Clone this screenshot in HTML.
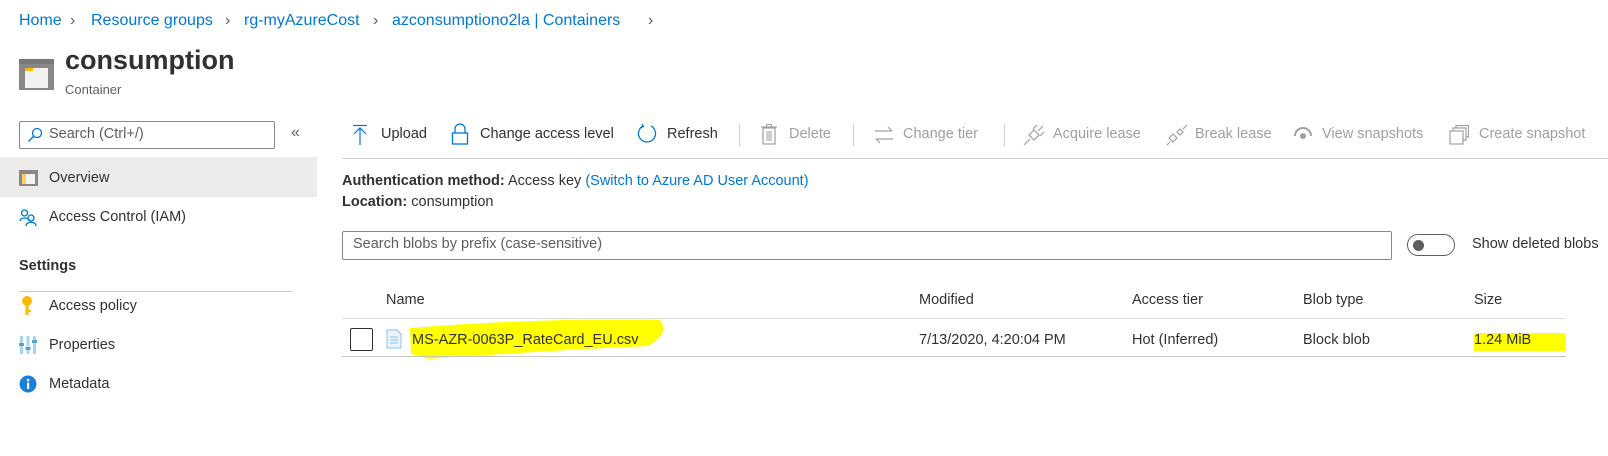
<!DOCTYPE html>
<html><head><meta charset="utf-8"><style>
*{margin:0;padding:0;box-sizing:border-box}
body{width:1608px;height:456px;background:#fff;position:relative;overflow:hidden;font-family:"Liberation Sans",sans-serif;color:#323130;font-size:14.5px}
.a{position:absolute;white-space:nowrap;line-height:1}
.b{color:#0078d4}
.g{color:#a19f9d}
.bc{font-size:16px;color:#0078d4;top:13px}
.sep{color:#605e5c}
.nm{transform-origin:left center}
</style></head><body>
<div class="a bc" style="left:19px">Home</div>
<div class="a bc sep" style="left:70px;color:#605e5c">&#x203A;</div>
<div class="a bc" style="left:91px">Resource groups</div>
<div class="a bc" style="left:225px;color:#605e5c">&#x203A;</div>
<div class="a bc" style="left:244px">rg-myAzureCost</div>
<div class="a bc" style="left:373px;color:#605e5c">&#x203A;</div>
<div class="a bc" style="left:392px">azconsumptiono2la | Containers</div>
<div class="a bc" style="left:648px;color:#605e5c">&#x203A;</div>

<svg class="a" style="left:19px;top:59px" width="35" height="31"><rect width="35" height="31" fill="#8a8886"/><rect x="0" y="0" width="35" height="5" fill="#7a7876"/><rect x="6" y="9" width="23" height="20" fill="#f2f2f2"/><rect x="6" y="9" width="8" height="3" fill="#ffb900"/></svg>
<div class="a" style="left:65px;top:47px;font-size:27px;font-weight:bold;color:#323130">consumption</div>
<div class="a" style="left:65px;top:83px;font-size:13px;color:#605e5c">Container</div>

<div class="a" style="left:19px;top:121px;width:256px;height:28px;border:1px solid #8a8886;border-radius:2px"></div>
<svg class="a" style="left:27px;top:127px" width="16" height="16"><circle cx="10" cy="6" r="4.5" fill="none" stroke="#0078d4" stroke-width="1.3"/><line x1="6.7" y1="9.3" x2="1.5" y2="14.5" stroke="#0078d4" stroke-width="1.4"/></svg>
<div class="a" style="left:49px;top:127px;color:#605e5c">Search (Ctrl+/)</div>
<div class="a" style="left:291px;top:125px;font-size:16px;color:#605e5c">«</div>

<div class="a" style="left:0;top:157px;width:317px;height:40px;background:#edebe9"></div>
<svg class="a" style="left:19px;top:170px" width="19" height="16"><rect width="19" height="16" fill="#8a8886"/><rect x="3" y="4" width="13" height="10" fill="#f2f2f2"/><rect x="3" y="4" width="4" height="10" fill="#ffb900" opacity=".6"/></svg>
<div class="a" style="left:49px;top:171px">Overview</div>
<svg class="a" style="left:19px;top:208px" width="20" height="20"><circle cx="5.5" cy="5" r="3" fill="none" stroke="#0078d4" stroke-width="1.3"/><path d="M1 13 C1 9 10 9 10 13" fill="none" stroke="#0078d4" stroke-width="1.3"/><circle cx="12" cy="10" r="3" fill="none" stroke="#0078d4" stroke-width="1.3"/><path d="M7 18 C7 13 17 13 17 18" fill="none" stroke="#0078d4" stroke-width="1.3"/></svg>
<div class="a" style="left:49px;top:210px">Access Control (IAM)</div>
<div class="a" style="left:19px;top:259px;font-weight:bold;color:#323130">Settings</div>
<div class="a" style="left:19px;top:291px;width:273px;height:1px;background:#c8c6c4"></div>
<svg class="a" style="left:21px;top:296px" width="12" height="20"><circle cx="6" cy="5" r="5" fill="#ffb900"/><rect x="4.5" y="8" width="3" height="11" fill="#ffb900"/><rect x="7" y="14" width="3" height="2" fill="#ffb900"/></svg>
<div class="a" style="left:49px;top:299px">Access policy</div>
<svg class="a" style="left:19px;top:336px" width="18" height="18"><g fill="#a8d4ef"><rect x="1" y="0" width="3" height="18"/><rect x="7.5" y="0" width="3" height="18"/><rect x="14" y="0" width="3" height="18"/></g><g fill="#5e9ec9"><rect x="0" y="7" width="5" height="3"/><rect x="6.5" y="11" width="5" height="3"/><rect x="13" y="4" width="5" height="3"/></g></svg>
<div class="a" style="left:49px;top:338px">Properties</div>
<svg class="a" style="left:19px;top:375px" width="18" height="18"><circle cx="9" cy="9" r="8.5" fill="#1a7fd8"/><rect x="8" y="7.5" width="2.2" height="6.5" fill="#fff"/><circle cx="9.1" cy="5" r="1.3" fill="#fff"/></svg>
<div class="a" style="left:49px;top:377px">Metadata</div>

<!-- toolbar -->
<svg class="a" style="left:352px;top:124px" width="16" height="22"><line x1="1" y1="1.5" x2="15" y2="1.5" stroke="#0078d4" stroke-width="1.2"/><line x1="8" y1="4" x2="8" y2="21" stroke="#0078d4" stroke-width="1.2"/><path d="M2 10 L8 4 L14 10" fill="none" stroke="#0078d4" stroke-width="1.2"/></svg>
<div class="a" style="left:381px;top:127px">Upload</div>
<svg class="a" style="left:451px;top:123px" width="18" height="22"><path d="M4 10 V6 A5 5 0 0 1 14 6 V10" fill="none" stroke="#0078d4" stroke-width="1.3"/><rect x="1.5" y="10" width="15" height="11" fill="none" stroke="#0078d4" stroke-width="1.3"/></svg>
<div class="a" style="left:480px;top:127px">Change access level</div>
<svg class="a" style="left:636px;top:123px" width="22" height="22"><path d="M7 3 A8.5 8.5 0 1 0 15 3" fill="none" stroke="#0078d4" stroke-width="1.3"/><path d="M6 1 L7.5 3.5 L4 5" fill="none" stroke="#0078d4" stroke-width="1.2"/></svg>
<div class="a" style="left:667px;top:127px">Refresh</div>
<div class="a" style="left:739px;top:124px;width:1px;height:22px;background:#d2d0ce"></div>
<svg class="a" style="left:761px;top:124px" width="16" height="21"><rect x="2" y="4" width="12" height="16" fill="none" stroke="#a19f9d" stroke-width="1.2"/><line x1="0" y1="3" x2="16" y2="3" stroke="#a19f9d" stroke-width="1.2"/><rect x="5.5" y="0.5" width="5" height="2.5" fill="none" stroke="#a19f9d"/><g stroke="#a19f9d"><line x1="6" y1="7" x2="6" y2="17"/><line x1="8" y1="7" x2="8" y2="17"/><line x1="10" y1="7" x2="10" y2="17"/></g></svg>
<div class="a g" style="left:789px;top:127px">Delete</div>
<div class="a" style="left:853px;top:124px;width:1px;height:22px;background:#d2d0ce"></div>
<svg class="a" style="left:874px;top:125px" width="20" height="20"><g fill="none" stroke="#a19f9d" stroke-width="1.2"><path d="M1 6 H18 M14 2 L18 6"/><path d="M19 14 H2 M6 18 L2 14"/></g></svg>
<div class="a g" style="left:903px;top:127px">Change tier</div>
<div class="a" style="left:1004px;top:124px;width:1px;height:22px;background:#d2d0ce"></div>
<svg class="a" style="left:1023px;top:124px" width="22" height="22"><g fill="none" stroke="#a19f9d" stroke-width="1.2"><path d="M6 11 L11 6 L16 11 L11 16 Z"/><path d="M1 21 L7 15 M15 7 L20 2 M10 5 L14 1 M17 12 L21 8"/></g></svg>
<div class="a g" style="left:1053px;top:127px">Acquire lease</div>
<svg class="a" style="left:1166px;top:124px" width="22" height="22"><g fill="none" stroke="#a19f9d" stroke-width="1.2"><path d="M3 14 L7 10 L11 14 L7 18 Z"/><path d="M11 8 L14 5 L17 8 L14 11 Z"/><path d="M1 21 L4 18 M17 5 L21 1"/></g></svg>
<div class="a g" style="left:1195px;top:127px">Break lease</div>
<svg class="a" style="left:1294px;top:127px" width="18" height="14"><path d="M1 9 A8 8 0 0 1 17 9" fill="none" stroke="#a19f9d" stroke-width="2"/><circle cx="9" cy="9" r="3" fill="#a19f9d"/></svg>
<div class="a g" style="left:1322px;top:127px">View snapshots</div>
<svg class="a" style="left:1449px;top:125px" width="20" height="20"><g fill="none" stroke="#a19f9d" stroke-width="1.2"><rect x="1" y="6" width="13" height="13"/><path d="M4 6 V3 H17 V15 H14 M7 3 V0.5 H19.5 V12 H17"/></g></svg>
<div class="a g" style="left:1479px;top:127px">Create snapshot</div>
<div class="a" style="left:342px;top:158px;width:1266px;height:1px;background:#d2d0ce"></div>

<div class="a" style="left:342px;top:174px"><b>Authentication method:</b> Access key <span class="b">(Switch to Azure AD User Account)</span></div>
<div class="a" style="left:342px;top:195px"><b>Location:</b> consumption</div>

<div class="a" style="left:342px;top:231px;width:1050px;height:29px;border:1px solid #8a8886;border-radius:2px"></div>
<div class="a" style="left:353px;top:237px;color:#605e5c">Search blobs by prefix (case-sensitive)</div>
<div class="a" style="left:1407px;top:234px;width:48px;height:22px;border:1px solid #605e5c;border-radius:11px"></div>
<div class="a" style="left:1413px;top:240px;width:11px;height:11px;border-radius:50%;background:#605e5c"></div>
<div class="a" style="left:1472px;top:237px">Show deleted blobs</div>

<div class="a" style="left:386px;top:293px">Name</div>
<div class="a" style="left:919px;top:293px">Modified</div>
<div class="a" style="left:1132px;top:293px">Access tier</div>
<div class="a" style="left:1303px;top:293px">Blob type</div>
<div class="a" style="left:1474px;top:293px">Size</div>
<div class="a" style="left:342px;top:318px;width:1224px;height:1px;background:#e1dfdd"></div>
<div class="a" style="left:350px;top:328px;width:23px;height:23px;border:1px solid #323130;border-radius:2px"></div>
<svg class="a" style="left:386px;top:329px" width="16" height="20"><path d="M1 1 H11 L15 5 V19 H1 Z" fill="#e8f3fb" stroke="#8cc4e8"/><g stroke="#8cc4e8"><line x1="4" y1="8" x2="12" y2="8"/><line x1="4" y1="11" x2="12" y2="11"/><line x1="4" y1="14" x2="12" y2="14"/></g></svg>
<svg class="a" style="left:408px;top:316px" width="260" height="44"><path d="M2 12 Q120 2 252 4 Q262 18 240 30 Q150 34 20 43 L3 38 Z" fill="#ffff00"/></svg>
<div class="a" style="left:412px;top:333px">MS-AZR-0063P_RateCard_EU.csv</div>
<div class="a" style="left:919px;top:333px">7/13/2020, 4:20:04 PM</div>
<div class="a" style="left:1132px;top:333px">Hot (Inferred)</div>
<div class="a" style="left:1303px;top:333px">Block blob</div>
<div class="a" style="left:1474px;top:333px;width:91px;height:18px;background:#ffff00"></div>
<div class="a" style="left:1474px;top:333px">1.24 MiB</div>
<div class="a" style="left:342px;top:356px;width:1224px;height:1px;background:#c8c6c4"></div>
</body></html>
